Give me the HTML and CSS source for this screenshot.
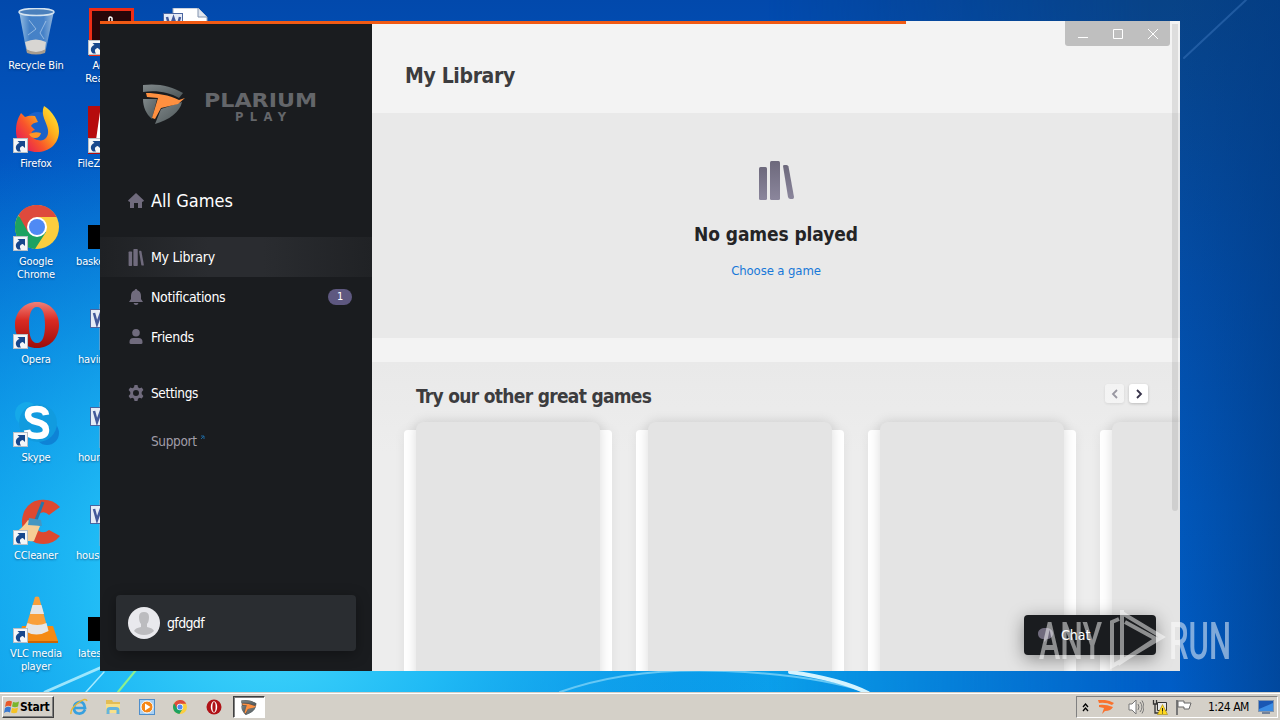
FILE: index.html
```
<!DOCTYPE html>
<html lang="en">
<head>
  <meta charset="UTF-8">
  <meta name="viewport" content="width=device-width, initial-scale=1.0">
  <title>Plarium Play</title>
  <link rel="stylesheet" href="styles.css">
</head>
<body>
  <!-- shared icons -->
  <svg width="0" height="0" class="defs">
    <defs>
      <linearGradient id="fx" x1="0.95" y1="0" x2="0.1" y2="0.7"><stop offset="0" stop-color="#fff03a"/><stop offset=".4" stop-color="#ffb01c"/><stop offset=".75" stop-color="#f8552b"/><stop offset="1" stop-color="#ea2a4c"/></linearGradient>
      <linearGradient id="red" x2="0" y2="1"><stop offset="0" stop-color="#f08078"/><stop offset=".4" stop-color="#d92a22"/><stop offset="1" stop-color="#9c0d0a"/></linearGradient>
      <linearGradient id="steel" x2="1" y2="1"><stop offset="0" stop-color="#80888a"/><stop offset="1" stop-color="#4c5557"/></linearGradient>
      <linearGradient id="purple" x2="0" y2="1"><stop offset="0" stop-color="#6d697c"/><stop offset="1" stop-color="#8b869c"/></linearGradient>
      <linearGradient id="glass" x2="1" y2="0"><stop offset="0" stop-color="#a9cce9"/><stop offset=".3" stop-color="#4c87c9"/><stop offset=".7" stop-color="#4e88cb"/><stop offset="1" stop-color="#a5c4e2"/></linearGradient>
    </defs>
    <symbol id="arrow" viewBox="0 0 15 15">
      <rect x=".5" y=".5" width="14" height="14" fill="#f4f6f8" stroke="#b9bfc6"/>
      <path d="M5 13.500C1.500 11 2.500 6 6.500 5L4.500 3H12v7L9.800 8C7 8.500 6 10.500 8 13.500z" fill="#17478c"/>
    </symbol>
    <symbol id="chrome" viewBox="0 0 44 44">
      <circle cx="22" cy="22" r="22" fill="#fbce3f"/>
      <path d="M22 22L3 11A22 22 0 0 0 20 44l11-17z" fill="#1da261"/>
      <path d="M22 12h19.600A22 22 0 0 0 3.500 10L13 27z" fill="#de4a3c"/>
      <circle cx="22" cy="22" r="10" fill="#fff"/><circle cx="22" cy="22" r="8" fill="#4f8af4"/>
    </symbol>
    <symbol id="opera" viewBox="0 0 44 46">
      <path fill-rule="evenodd" fill="url(#red)" d="M22 0C9 0 0 10 0 23s9 23 22 23 22-10 22-23S35 0 22 0zm0 5c6 0 8 8 8 18s-2 18-8 18-8-8-8-18 2-18 8-18z"/>
    </symbol>
    <symbol id="word" viewBox="0 0 48 48">
      <path d="M10 0h25l9 9v39H10z" fill="#fff" stroke="#9ba7bc"/><path d="M35 0v9h9" fill="#dfe5ee" stroke="#8394ae"/>
      <path d="M20 14h19M20 19h19M20 24h19M15 30h24M15 35h24" stroke="#86a4cf"/>
      <rect x=".5" y="5.500" width="19" height="18" fill="#e6ebf6" stroke="#4a65a0"/>
      <path d="M4 9l3 11 3.500-10L14 20l3-11" fill="none" stroke="#42589a" stroke-width="2.500"/>
    </symbol>
    <symbol id="shield" viewBox="0 0 42 40">
      <path d="M0 1C14-1 29 2 40 9L36 14C26 8 13 6 0 8z" fill="url(#steel)"/>
      <path d="M0 15h14L9 35C3 30 0 23 0 15z" fill="url(#steel)"/>
      <path d="M39 18c-2 10-13 18-27 22l6-15z" fill="url(#steel)"/>
      <path d="M3 9c11 0 23 2 33 7l6-2-7 6-17 4-6 11-3-1 6-20-11-1z" fill="#ff9040"/>
    </symbol>
    <symbol id="books" viewBox="0 0 36 39">
      <rect x="1" y="6" width="8" height="33" rx="1.500"/><rect x="12" y="0" width="10" height="39" rx="1.500"/><path d="M25 5q0-1 1.500-1h2q1.500 0 2 1.500L36 36q0 2-1.500 2h-2q-2 0-2.500-2z"/>
    </symbol>
  </svg>

  <svg class="wallpaper" viewBox="0 0 1280 720" preserveAspectRatio="none">
    <defs>
      <linearGradient id="left" x1="0" y1="0" x2="0" y2="1"><stop offset="0" stop-color="#0249ac"/><stop offset=".22" stop-color="#0257c2"/><stop offset=".5" stop-color="#0583dc"/><stop offset=".75" stop-color="#09a6ee"/><stop offset="1" stop-color="#0b9eea"/></linearGradient>
      <linearGradient id="right" x1="0" y1="0" x2="0" y2="1"><stop offset="0" stop-color="#084387"/><stop offset=".4" stop-color="#034ea9"/><stop offset=".7" stop-color="#0158bc"/><stop offset="1" stop-color="#005ec8"/></linearGradient>
      <linearGradient id="fade" x1="0" x2="1"><stop offset="0" stop-color="#fff" stop-opacity="0"/><stop offset=".6" stop-color="#fff" stop-opacity="0"/><stop offset=".9" stop-color="#fff"/></linearGradient>
      <mask id="m"><rect width="1280" height="720" fill="url(#fade)"/></mask>
      <radialGradient id="glow" gradientUnits="userSpaceOnUse" cx="270" cy="600" r="520"><stop offset="0" stop-color="#46dafc"/><stop offset=".35" stop-color="#22bdf6" stop-opacity=".9"/><stop offset="1" stop-color="#0683e2" stop-opacity="0"/></radialGradient>
      <linearGradient id="edge" x1="0" x2="1"><stop offset="0" stop-color="#013a83" stop-opacity="0"/><stop offset="1" stop-color="#013a83" stop-opacity=".6"/></linearGradient>
    </defs>
    <rect width="1280" height="720" fill="url(#left)"/>
    <rect width="1280" height="720" fill="url(#glow)"/>
    <rect width="1280" height="720" fill="url(#right)" mask="url(#m)"/>
    <rect x="1170" width="110" height="720" fill="url(#edge)"/>
    <g fill="none" stroke-linecap="round">
      <path d="M45 692L102 667" stroke="#bdf3ff" stroke-width="3" opacity=".8"/>
      <path d="M86 692l18-20" stroke="#a6eaff" stroke-width="1.500"/>
      <path d="M118 692l18-22" stroke="#8cf08f" stroke-width="2"/>
      <path d="M560 692q70-25 165-21 90 4 145 22" stroke="#66c8f5" stroke-width="2"/>
      <path d="M790 672q50 7 78 21" stroke="#d5f4ff" stroke-width="4"/>
      <path d="M1184 58l62-58" stroke="#3671b8" stroke-width="2" opacity=".55"/>
    </g>
  </svg>

  <div class="desktop">
    <div class="column">
      <div class="shortcut">
        <svg width="48" height="48" viewBox="0 0 48 48"><path d="M7 3l7 38q10 6 20 0l8-38z" fill="url(#glass)" opacity=".9"/><path d="M13 34q11-5 21 0l-1 8q-9 5-18 0z" fill="#d8d6d3"/><path d="M14 41q10 6 20 0l-1 4q-9 3-18 0z" fill="#a79c8e"/><ellipse cx="24.500" cy="4" rx="17.500" ry="3.500" fill="#4b80bc" stroke="#d4e3f0" stroke-width="1.500"/><path d="M17 12l7 9-8 6M34 13l-6 12 4 6" fill="none" stroke="#c4dcf2" opacity=".6"/></svg>
        <span>Recycle Bin</span>
      </div>
      <div class="shortcut">
        <svg width="48" height="48" viewBox="0 0 48 48"><circle cx="26" cy="21" r="15" fill="#1b62c9"/><path d="M32 0c8 5 15 15 15 25 0 13-10 21-22 21C12 46 4 37 4 25 4 17 6 12 9 7l4 4q5-2 10-1l3 6q-6 1-7 4l4 4c-5 1-5 7 0 9 8 4 14-1 13-9-1-8-8-15-4-24z" fill="url(#fx)"/><path d="M17 28q6-3 12-1-1 5-6 5-4 0-6-4z" fill="#ff9626"/></svg>
        <svg class="link"><use href="#arrow"/></svg>
        <span>Firefox</span>
      </div>
      <div class="shortcut">
        <svg width="48" height="48" viewBox="0 0 48 48"><use href="#chrome" x="3" y="1" width="44" height="44"/></svg>
        <svg class="link"><use href="#arrow"/></svg>
        <span>Google<br>Chrome</span>
      </div>
      <div class="shortcut">
        <svg width="48" height="48" viewBox="0 0 48 48"><use href="#opera" x="3" y="0" width="44" height="46"/></svg>
        <svg class="link"><use href="#arrow"/></svg>
        <span>Opera</span>
      </div>
      <div class="shortcut">
        <svg width="48" height="48" viewBox="0 0 48 48"><circle cx="15" cy="14" r="12" fill="#15a9e9"/><circle cx="35" cy="33" r="12" fill="#0e83d6"/><circle cx="26" cy="23" r="19" fill="#119bdf"/><path d="M34 15Q33 9 25 9q-9 0-9 6 0 5 9 7 9 2 9 8 0 6-9 6t-10-6" fill="none" stroke="#fff" stroke-width="6.500"/></svg>
        <svg class="link"><use href="#arrow"/></svg>
        <span>Skype</span>
      </div>
      <div class="shortcut">
        <svg width="48" height="48" viewBox="0 0 48 48"><path d="M48 9L37 17Q32 12 27 16c-5 5-5 13 0 17q5 3 10-1l11 6Q39 49 24 45 9 39 10 22 12 5 27 2q13-2 21 7z" fill="#dd4930"/><path d="M16 22l12 6-6 15q-10 2-20-8 8-4 14-13z" fill="#f6ce96"/><path d="M31 4L24 22" stroke="#2577a8" stroke-width="3"/><path d="M17 20l12 2 1 6-14-1z" fill="#4596c1"/></svg>
        <svg class="link"><use href="#arrow"/></svg>
        <span>CCleaner</span>
      </div>
      <div class="shortcut">
        <svg width="48" height="48" viewBox="0 0 48 48"><path d="M10 30h31l5 15H6z" fill="#f58a13"/><path d="M6 45h40v2H6z" fill="#cc6504"/><path d="M23 1q2-1 4 0l9 33q-11 8-23 0z" fill="#f9a03a"/><path d="M20.500 9h9l2.500 9H18zM15.500 27q10 4 19 0l2 8q-12 7-24 0z" fill="#e6e6e6"/></svg>
        <svg class="link"><use href="#arrow"/></svg>
        <span>VLC media<br>player</span>
      </div>
    </div>
    <div class="column second">
      <div class="shortcut">
        <svg width="48" height="48" viewBox="0 0 48 48"><rect x="3.500" y="1.500" width="42" height="46" fill="#280609" stroke="#ee2d16" stroke-width="3"/><path d="M22 13v-3q1-2 3 0v3" fill="none" stroke="#fff" stroke-width="1.500"/></svg>
        <svg class="link"><use href="#arrow"/></svg>
        <span>Acrobat<br>Reader DC</span>
      </div>
      <div class="shortcut">
        <svg width="48" height="48" viewBox="0 0 48 48"><rect x="1" width="46" height="48" fill="#b60b0d"/><path d="M9 34L13 6h20v6H19v22z" fill="#fff"/></svg>
        <svg class="link"><use href="#arrow"/></svg>
        <span>FileZilla Client</span>
      </div>
      <div class="shortcut"><i class="thumb"></i><span class="file">basket</span></div>
      <div class="shortcut"><svg width="48" height="48"><use href="#word" x="3" y="2"/></svg><span class="file word">having</span></div>
      <div class="shortcut"><svg width="48" height="48"><use href="#word" x="3" y="2"/></svg><span class="file word">hours</span></div>
      <div class="shortcut"><svg width="48" height="48"><use href="#word" x="3" y="2"/></svg><span class="file">house</span></div>
      <div class="shortcut"><i class="thumb"></i><span class="file word">latest</span></div>
    </div>
    <div class="column third">
      <div class="shortcut"><svg width="48" height="48"><use href="#word"/></svg></div>
    </div>
  </div>

  <div class="window">
    <div class="progress"></div>
    <aside class="sidebar">
      <div class="brand">
        <svg width="42" height="40"><use href="#shield"/></svg>
        <svg class="brand-name" width="120" height="36">
          <text x="0" y="15" font-size="19" textLength="113" lengthAdjust="spacingAndGlyphs">PLARIUM</text>
          <text x="31" y="29" font-size="11.500" textLength="51" lengthAdjust="spacing">PLAY</text>
        </svg>
      </div>
      <nav>
        <a class="item home"><svg width="16" height="16" viewBox="0 0 16 16"><path d="M8 0l8 7.500-1 1.300h-1V15H10v-5H6v5H2V8.800H1L0 7.500z"/></svg>All Games</a>
        <a class="item active"><svg width="16" height="17"><use href="#books"/></svg>My Library</a>
        <a class="item"><svg width="16" height="16" viewBox="0 0 16 16"><path d="M8 0q1.300 0 1.300 1.300Q13 2.500 13 7v3l2 3H1l2-3V7q0-4.500 3.700-5.700Q6.700 0 8 0zM5.500 14h5Q10 16 8 16t-2.500-2z"/></svg>Notifications<b class="badge">1</b></a>
        <a class="item"><svg width="16" height="16" viewBox="0 0 16 16"><circle cx="8" cy="3.800" r="3.800"/><path d="M1.500 13q0-4 4-4h5q4 0 4 4v.5q0 1.500-1.500 1.500H3q-1.500 0-1.500-1.500z"/></svg>Friends</a>
        <a class="item settings"><svg width="16" height="16" viewBox="0 0 16 16"><path fill-rule="evenodd" d="M6.500 0h3l.5 2.300 1.500.9 2.300-.8 1.600 2.700L13.700 7v2l1.700 1.900-1.600 2.700-2.300-.8-1.500.9-.5 2.300h-3L6 13.700l-1.500-.9-2.300.8L.6 10.900 2.300 9V7L.6 5.100l1.600-2.700 2.300.8L6 2.300zM8 5a3 3 0 1 0 0 6 3 3 0 0 0 0-6z"/></svg>Settings</a>
        <a class="item support">Support<svg width="5" height="5" viewBox="0 0 5 5"><path d="M1 1h3v3M4 1L1 4"/></svg></a>
      </nav>
      <div class="user">
        <svg width="32" height="32" viewBox="0 0 32 32"><circle cx="16" cy="16" r="16" fill="#e9e9ed"/><path d="M11 10q0-5 5-5t5 5q0 5-2 7v3q6 1 7 4-4 4-10 4T6 24q1-3 7-4v-3q-2-2-2-7z" fill="#bcbcbf"/></svg>
        <span>gfdgdf</span>
      </div>
    </aside>

    <main>
      <header><h1>My Library</h1></header>
      <section class="empty">
        <svg width="36" height="39"><use href="#books" fill="url(#purple)"/></svg>
        <h2>No games played</h2>
        <a>Choose a game</a>
      </section>
      <section class="others">
        <div class="others-head">
          <h3>Try our other great games</h3>
          <div class="arrows">
            <button class="off"><svg width="8" height="10" viewBox="0 0 8 10"><path d="M6 1L2 5l4 4"/></svg></button>
            <button><svg width="8" height="10" viewBox="0 0 8 10"><path d="M2 1l4 4-4 4"/></svg></button>
          </div>
        </div>
        <div class="games">
          <div class="game"><div></div></div>
          <div class="game"><div></div></div>
          <div class="game"><div></div></div>
          <div class="game"><div></div></div>
        </div>
      </section>
    </main>

    <div class="scrollbar"></div>
    <div class="controls">
      <svg width="105" height="25"><path d="M13 16.500h10M48.500 8.500h9v9h-9zM83 8l10 10M93 8L83 18"/></svg>
    </div>
    <div class="chat"><svg width="15" height="14" viewBox="0 0 15 14"><path d="M7.500 0C12 0 15 2 15 5.500S12 11 9 11l-3 3v-3C2 11 0 9 0 5.500S3 0 7.500 0z"/></svg>Chat</div>
  </div>

  <svg class="watermark" width="206" height="64" viewBox="0 0 206 64">
    <text x="4" y="51" font-size="51" textLength="63" lengthAdjust="spacingAndGlyphs">ANY</text>
    <path d="M87 2v51M87 5l40 24-40 24M90 14l31 17-38 25M84 11l-7 3v44l9-5" fill="none" stroke="#fff" stroke-width="4"/>
    <text x="134" y="51" font-size="51" textLength="62" lengthAdjust="spacingAndGlyphs">RUN</text>
  </svg>

  <footer class="taskbar">
    <div class="start">
      <svg width="16" height="16" viewBox="0 0 16 16"><path d="M2 3q3-2 6-.5L7 7.500Q4 6 1 8z" fill="#e8592a"/><path d="M9 3q3 1 6-.5L14 7.500Q11 9 8 7.500z" fill="#7ab52e"/><path d="M1 9q3-2 6-.5L6 13.500Q3 12 0 14z" fill="#3979d0"/><path d="M8 9q3 1 6-.5L13 13.500Q10 15 7 13.500z" fill="#f5c224"/></svg>
      <b>Start</b>
    </div>
    <div class="apps">
      <svg width="18" height="18" viewBox="0 0 18 18"><path d="M15 11.500Q13 16 8.500 15.500 4 15 4 10t5-6 6 6H5" fill="none" stroke="#37a0df" stroke-width="2.700"/><path d="M1 16Q0 11 8 5q8-6 9-2" fill="none" stroke="#e7b834" stroke-width="1.500"/></svg>
      <svg width="18" height="18" viewBox="0 0 18 18"><path d="M2 2h6l1 2h7v11H2z" fill="#e3bd55"/><path d="M2 6h14v9H2z" fill="#f8e08a"/><path d="M4 16v-4q0-1.500 2-1.500h6q2 0 2 1.500v4" fill="none" stroke="#65b4de" stroke-width="3"/></svg>
      <svg width="18" height="18" viewBox="0 0 18 18"><rect x="1.500" y="1.500" width="15" height="15" fill="#a8d0f3" stroke="#4e8ecb"/><circle cx="9" cy="9" r="6" fill="#f58717" stroke="#fff"/><path d="M7 5.500v7L12.500 9z" fill="#fff"/></svg>
      <svg width="18" height="18"><use href="#chrome" x="2" y="2" width="14" height="14"/></svg>
      <svg width="18" height="18"><circle cx="9" cy="9" r="7.500" fill="#b01217"/><ellipse cx="9" cy="9" rx="3.200" ry="5.800" fill="#fff"/><ellipse cx="9" cy="9" rx="1.600" ry="5" fill="#b01217"/></svg>
    </div>
    <div class="task"><svg width="16" height="15" viewBox="0 0 42 40"><path d="M1 1Q22-3 41 9 39 30 12 40 1 30 1 1z" fill="#5d5551"/><use href="#shield" width="42" height="40"/></svg></div>
    <div class="tray">
      <svg width="7" height="9" viewBox="0 0 7 9"><path d="M1 4l2.500-3L6 4M1 8l2.500-3L6 8" fill="none" stroke="#000" stroke-width="1.300"/></svg>
      <svg width="16" height="14" viewBox="0 0 16 14"><path d="M0 0q9-1 16 3l-2 2Q8 2 1 3zM1 5q6-1 14 2-2 4-8 4l-3 3 2-6-5-1z" fill="#f9722e"/></svg>
      <svg width="16" height="16" viewBox="0 0 16 16"><path d="M1 5h3l4-4v14l-4-4H1z" fill="#fff" stroke="#777"/><path d="M10 5q2 3 0 6M12 3q4 5 0 10M14 1.500q4 6.500 0 13" fill="none" stroke="#777"/></svg>
      <svg width="16" height="16" viewBox="0 0 16 16"><path d="M5.500 3.500h9v8h-9z" fill="#e9e9e9" stroke="#333"/><path d="M1.500 1v4h3V1M3 5v9h4" fill="none" stroke="#333" stroke-width="1.300"/><path d="M10.500 5.500l5 10h-10z" fill="#ffd91f" stroke="#a18612" stroke-width=".6"/><path d="M10.500 9v3.500M10.500 13.500v1" stroke="#222"/></svg>
      <svg width="17" height="16" viewBox="0 0 17 16"><path d="M2 1v15" stroke="#777" stroke-width="2"/><path d="M3 2h6v2h7l-2 6H9V8H3z" fill="#fff" stroke="#666"/></svg>
      <span class="clock">1:24 AM</span>
      <svg width="16" height="14" viewBox="0 0 16 14"><rect x=".5" y=".5" width="15" height="11" fill="#1a57b3" stroke="#8496ad"/><path d="M1 9l14-6v8H1z" fill="#3b8ce3"/><path d="M4 13h8" stroke="#738299" stroke-width="2"/></svg>
    </div>
  </footer>
</body>
</html>
```
FILE: styles.css
```
* {
  box-sizing: border-box;
}

body {
  margin: 0;
  width: 1280px;
  height: 720px;
  overflow: hidden;
  position: relative;
  background: #0257c2;
  font-family: "DejaVu Sans Condensed", "Noto Sans", sans-serif;
  font-size: 13px;
}

svg {
  display: block;
  flex: none;
}

h1, h2, h3 {
  margin: 0;
}

.defs {
  position: absolute;
}

.wallpaper {
  position: absolute;
  width: 1280px;
  height: 720px;
}

/* desktop icons */
.desktop {
  position: absolute;
  top: 8px;
  left: 0;
  display: flex;
  gap: 3px;
}

.column {
  width: 72px;
}

.third {
  padding-left: 2px;
}

.shortcut {
  position: relative;
  height: 98px;
  display: flex;
  flex-direction: column;
  align-items: center;
  color: #fff;
  font-size: 11px;
  line-height: 13px;
  text-align: center;
  text-shadow: 0 1px 2px rgba(0, 20, 60, 0.5);
}

.shortcut > span {
  margin-top: 3px;
  white-space: nowrap;
  letter-spacing: -0.15px;
}

.shortcut > .file {
  width: 100%;
  padding-left: 1px;
  text-align: left;
}

.shortcut > .word {
  padding-left: 3px;
}

.link {
  position: absolute;
  left: 13px;
  top: 32px;
  width: 15px;
  height: 15px;
}

.thumb {
  width: 46px;
  height: 24px;
  margin: 21px 0 3px;
  background: #000;
}

.second .word + span {
  padding-left: 3px;
}

/* app window */
.window {
  position: absolute;
  left: 100px;
  top: 21px;
  width: 1080px;
  height: 650px;
  display: flex;
  overflow: hidden;
  background: #f3f3f3;
}

.progress {
  position: absolute;
  z-index: 2;
  width: 806px;
  height: 3px;
  background: #f05a14;
}

.sidebar {
  width: 272px;
  padding: 63px 0 20px;
  display: flex;
  flex-direction: column;
  background: #1a1c1f;
}

.brand {
  height: 97px;
  padding-left: 43px;
  display: flex;
  gap: 19px;
}

.brand-name {
  margin-top: 8px;
  fill: #64666a;
  font-family: "DejaVu Sans", sans-serif;
  font-weight: bold;
}

.item {
  height: 40px;
  padding: 0 20px 0 28px;
  display: flex;
  align-items: center;
  gap: 7px;
  color: #fff;
  font-size: 14px;
  letter-spacing: -0.35px;
}

.item svg {
  fill: #706b7d;
}

.home {
  margin-bottom: 16px;
  padding-bottom: 2px;
  font-size: 18px;
  letter-spacing: 0;
}

.home svg {
  margin-top: 1px;
}

.active {
  background: linear-gradient(90deg, #1f2124, #2a2c30 40%, #2a2c30 60%, #202225);
  letter-spacing: -0.25px;
}

.badge {
  width: 24px;
  height: 16px;
  margin-left: auto;
  border-radius: 8px;
  background: #5e5880;
  font-size: 11px;
  font-weight: normal;
  line-height: 16px;
  text-align: center;
}

.settings {
  margin-top: 16px;
  font-size: 13.5px;
}

.support {
  margin-top: 8px;
  padding-left: 51px;
  gap: 3px;
  color: #a09da8;
  font-size: 13.5px;
}

.support svg {
  margin-top: -8px;
  fill: none;
  stroke: #1d659b;
}

.user {
  height: 56px;
  margin: auto 16px 0;
  padding-left: 12px;
  display: flex;
  align-items: center;
  gap: 7px;
  border-radius: 4px;
  background: #2a2d31;
  box-shadow: 0 3px 14px rgba(0, 0, 0, 0.35);
  color: #fff;
  font-size: 14px;
}

.user span {
  letter-spacing: -0.65px;
}

main {
  width: 808px;
  display: flex;
  flex-direction: column;
}

header {
  height: 92px;
  padding: 40px 33px 0;
}

h1 {
  color: #3c3c3e;
  font-size: 21px;
  line-height: 30px;
  letter-spacing: -0.35px;
}

.empty {
  height: 225px;
  padding-top: 48px;
  display: flex;
  flex-direction: column;
  align-items: center;
  background: #e9e9e9;
}

.empty h2 {
  margin-top: 20px;
  color: #242426;
  font-size: 19px;
  line-height: 28px;
  letter-spacing: -0.1px;
}

.empty a {
  margin-top: 13px;
  color: #1878d8;
  font-size: 13px;
  line-height: 20px;
  letter-spacing: -0.1px;
}

.others {
  flex: 1;
  margin-top: 24px;
  padding: 22px 32px 0;
  overflow: hidden;
  background: linear-gradient(#e9e9e9, #ededed 90px);
}

.others-head {
  height: 38px;
  padding-left: 12px;
  display: flex;
  justify-content: space-between;
}

h3 {
  color: #3c3c3e;
  font-size: 19px;
  line-height: 24px;
  letter-spacing: -0.7px;
}

.arrows {
  display: flex;
  gap: 5px;
}

.arrows button {
  width: 19px;
  height: 19px;
  padding: 0;
  display: flex;
  align-items: center;
  justify-content: center;
  border: 0;
  border-radius: 3px;
  background: #fff;
  box-shadow: 0 1px 3px rgba(0, 0, 0, 0.2);
}

.arrows .off {
  opacity: 0.45;
}

.arrows svg {
  fill: none;
  stroke: #37334a;
  stroke-width: 1.8;
}

.games {
  display: flex;
  gap: 24px;
}

.game {
  flex: none;
  width: 208px;
  height: 340px;
  margin-top: 8px;
  padding: 0 12px;
  border-radius: 4px;
  background: #fff;
  box-shadow: 0 0 12px rgba(0, 0, 0, 0.06);
}

.game div {
  height: 360px;
  margin-top: -8px;
  border-radius: 8px;
  background: #e4e4e4;
  box-shadow: 0 0 12px rgba(0, 0, 0, 0.15);
}

.scrollbar {
  position: absolute;
  right: 2px;
  top: 3px;
  width: 6px;
  height: 487px;
  border-radius: 0 0 3px 3px;
  background: rgba(0, 0, 0, 0.09);
}

.controls {
  position: absolute;
  right: 10px;
  top: 0;
  border-radius: 0 0 3px 3px;
  background: #bfbfbf;
}

.controls svg {
  fill: none;
  stroke: #fff;
}

.chat {
  position: absolute;
  left: 924px;
  top: 594px;
  width: 132px;
  height: 40px;
  padding-left: 14px;
  display: flex;
  align-items: center;
  gap: 8px;
  border-radius: 4px;
  background: #1a1c1f;
  box-shadow: 0 4px 18px rgba(0, 0, 0, 0.4);
  color: #fff;
  font-size: 14px;
}

.chat svg {
  fill: #706b7d;
}

.watermark {
  position: absolute;
  left: 1035px;
  top: 608px;
  opacity: 0.5;
  fill: #fff;
  font-family: Roboto, sans-serif;
  font-weight: 500;
}

/* taskbar */
.taskbar {
  position: absolute;
  left: 0;
  bottom: 0;
  width: 100%;
  height: 28px;
  padding: 3px 2px 1px;
  display: flex;
  align-items: center;
  background: #d4d0c8;
  border-top: 1px solid #d4d0c8;
  box-shadow: inset 0 1px #fff;
}

.taskbar > * {
  margin-bottom: 1px;
}

.start {
  width: 52px;
  height: 22px;
  padding-left: 1px;
  display: flex;
  align-items: center;
  gap: 0;
  border: 1px solid;
  border-color: #fff #404040 #404040 #fff;
  box-shadow: inset -1px -1px #808080;
}

.start b {
  font-size: 12px;
  letter-spacing: -0.25px;
}

.apps {
  margin-left: 16px;
  display: flex;
  gap: 15.8px;
}

.task {
  width: 32px;
  height: 22px;
  margin-left: 10px;
  display: flex;
  align-items: center;
  justify-content: center;
  border: 1px solid;
  border-color: #404040 #fff #fff #404040;
  box-shadow: inset 1px 1px #808080;
  background: #fff;
}

.tray {
  width: 202px;
  height: 22px;
  margin-left: auto;
  padding-left: 5px;
  display: flex;
  align-items: center;
  border: 1px solid;
  border-color: #808080 #fff #fff #808080;
}

.tray svg:nth-child(2) {
  margin: 0 14px 0 9px;
}

.tray svg:nth-child(4) {
  margin: 0 7px 0 8px;
}

.clock {
  margin: 0 9px 0 16px;
  font-size: 12px;
  letter-spacing: -0.5px;
  white-space: nowrap;
}
```
